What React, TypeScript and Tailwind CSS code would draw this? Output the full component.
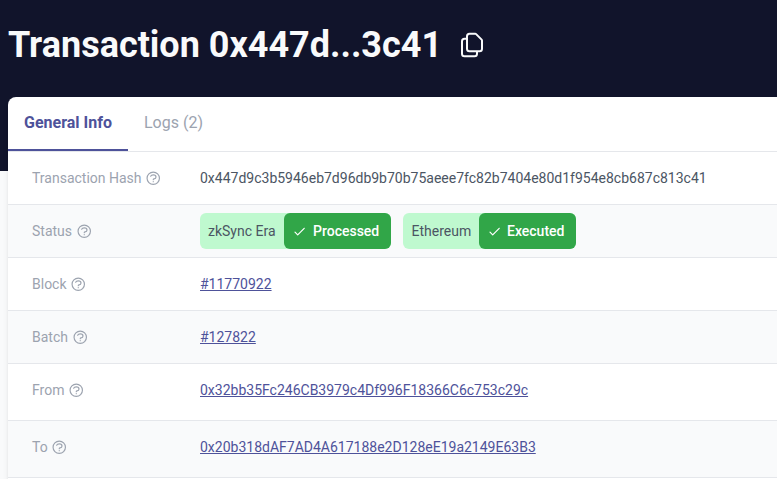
import type { ReactNode } from "react";

function HelpIcon() {
  return (
    <svg className="ml-[3.75px] size-[16.5px] shrink-0" viewBox="0 0 24 24" fill="none" stroke="currentColor" strokeWidth="1.7" strokeLinecap="round" strokeLinejoin="round">
      <path d="M8.228 9c.549-1.165 2.03-2 3.772-2 2.21 0 4 1.343 4 3 0 1.4-1.278 2.575-3.006 2.907-.542.104-.994.54-.994 1.093m0 3h.01M21 12a9 9 0 11-18 0 9 9 0 0118 0z" />
    </svg>
  );
}

function CopyIcon() {
  return (
    <svg className="size-[30px]" viewBox="0 0 24 24" fill="none" stroke="currentColor" strokeWidth="1.6" strokeLinecap="round" strokeLinejoin="round">
      <path d="M8 7v8a2 2 0 002 2h6M8 7V5a2 2 0 012-2h4.586a1 1 0 01.707.293l4.414 4.414a1 1 0 01.293.707V15a2 2 0 01-2 2h-2M8 7H6a2 2 0 00-2 2v10a2 2 0 002 2h8a2 2 0 002-2v-2" />
    </svg>
  );
}

function Badge({ network, state, networkClass, stateClass }: { network: string; state: string; networkClass: string; stateClass: string }) {
  return (
    <div className="flex h-9 rounded-md bg-[#bff9cf]">
      <span className={`flex items-center text-[#4b5563] ${networkClass}`}>{network}</span>
      <span className={`flex items-center rounded-md bg-[#31a648] pl-[9px] font-medium text-white ${stateClass}`}>
        <svg className="size-[13px]" viewBox="0 0 13 13" fill="none" stroke="currentColor" strokeWidth="1.2" strokeLinecap="round" strokeLinejoin="round">
          <path d="M2 7.2 4.7 9.9 11.2 3.3" />
        </svg>
        {state}
      </span>
    </div>
  );
}

function Row({ label, className, children }: { label: string; className: string; children: ReactNode }) {
  return (
    <div className={`flex border-b border-[#e5e7eb] pl-6 ${className}`}>
      <div className="flex h-[52px] w-[168px] shrink-0 items-center text-[#9ca3af]">
        {label}
        <HelpIcon />
      </div>
      <div className="flex h-[52px] items-center whitespace-nowrap text-[#4b5563]">{children}</div>
    </div>
  );
}

function Link({ children }: { children: string }) {
  return <a className="text-[#4e529a] underline underline-offset-1">{children}</a>;
}

export default function App() {
  return (
    <div className="h-[479px] overflow-hidden bg-[linear-gradient(#11142b_171px,#f9fafb_171px)] pl-2 font-[Roboto,sans-serif] text-sm">
      <header className="flex h-[97px] items-start pt-6 text-[#f9fafb]">
        <h1 className="mt-px mr-[14.5px] text-[36px] leading-10 font-bold whitespace-nowrap">Transaction 0x447d...3c41</h1>
        <div className="mt-[6px]"><CopyIcon /></div>
      </header>
      <main className="h-[400px] rounded-tl-lg bg-white shadow-md">
        <nav className="flex h-[55px] border-b border-[#e5e7eb] text-base">
          <div className="h-[54px] w-[120px] border-b-2 border-[#4e529a] pt-[14px] pl-4 font-bold whitespace-nowrap text-[#4e529a]">General Info</div>
          <div className="pt-[14px] pl-4 text-[#9ca3af]">Logs (2)</div>
        </nav>
        <Row label="Transaction Hash" className="h-[53px]">0x447d9c3b5946eb7d96db9b70b75aeee7fc82b7404e80d1f954e8cb687c813c41</Row>
        <Row label="Status" className="h-[53px] bg-[#f9fafb]">
          <div className="flex gap-3">
            <Badge network="zkSync Era" state="Processed" networkClass="w-[84px] pl-2" stateClass="w-[107px] gap-[7px]" />
            <Badge network="Ethereum" state="Executed" networkClass="w-[76px] pl-[8.5px]" stateClass="w-[97px] gap-1.5" />
          </div>
        </Row>
        <Row label="Block" className="h-[53px]"><Link>#11770922</Link></Row>
        <Row label="Batch" className="h-[53px] bg-[#f9fafb]"><Link>#127822</Link></Row>
        <Row label="From" className="h-[57px]"><Link>0x32bb35Fc246CB3979c4Df996F18366C6c753c29c</Link></Row>
        <Row label="To" className="h-[57px] bg-[#f9fafb]"><Link>0x20b318dAF7AD4A617188e2D128eE19a2149E63B3</Link></Row>
      </main>
    </div>
  );
}
